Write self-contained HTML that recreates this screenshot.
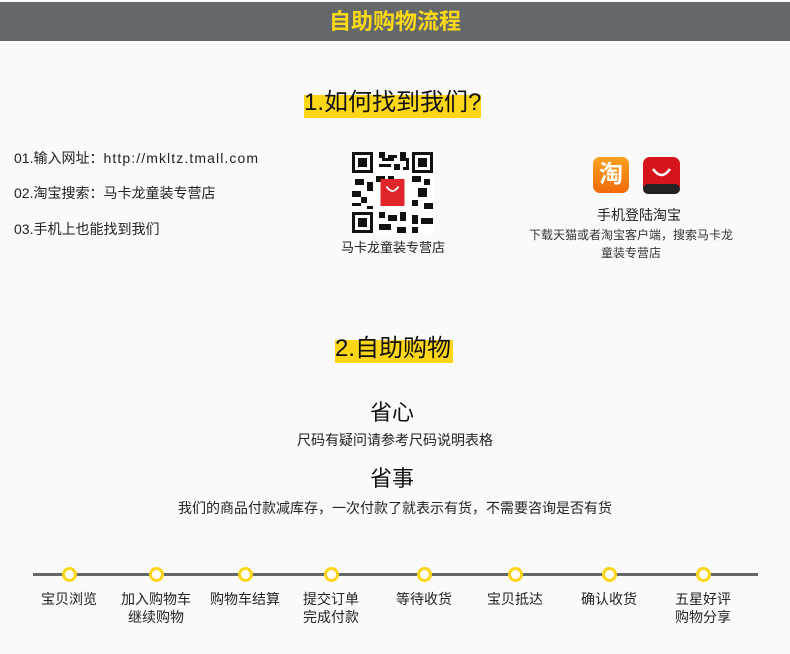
<!DOCTYPE html>
<html><head><meta charset="utf-8"><style>
*{margin:0;padding:0;box-sizing:border-box}
body{width:790px;height:654px;background:#fafafa;font-family:"Liberation Sans","Noto Sans CJK SC",sans-serif;color:#222;position:relative;overflow:hidden}
.a{position:absolute;white-space:nowrap}
.hdr{position:absolute;left:0;top:2px;width:790px;height:39px;background:#65686b;color:#fbd914;font-size:22px;font-weight:bold;text-align:center;line-height:39px}
.hl{position:absolute;background:#fcd617}
.t{font-size:24px;color:#111}
.s{font-size:14px;color:#222}
.line{position:absolute;left:33px;top:573px;width:725px;height:3px;background:#65686b}
.dot{position:absolute;top:567px;width:15px;height:15px;border-radius:50%;border:3px solid #fcd617;background:#fff}
.lb{position:absolute;top:590px;font-size:14px;text-align:center;width:90px;line-height:18px;color:#222}
</style></head><body>
<div class="hdr">自助购物流程</div>
<div class="hl" style="left:304px;top:95px;width:177px;height:23px"></div>
<div class="a t" style="left:304px;top:82px">1.如何找到我们?</div>
<div class="a s" style="left:14px;top:148px">01.输入网址：<span style="letter-spacing:1.1px">http://mkltz.tmall.com</span></div>
<div class="a s" style="left:14px;top:183px">02.淘宝搜索：马卡龙童装专营店</div>
<div class="a s" style="left:14px;top:219px">03.手机上也能找到我们</div>
<svg class="a" style="left:352px;top:152px" width="81" height="81" viewBox="0 0 27 27">
<rect width="27" height="27" fill="#fff"/>
<g fill="#111">
<rect x="0" y="0" width="7" height="7"/><rect x="20" y="0" width="7" height="7"/><rect x="0" y="20" width="7" height="7"/>
<path d="M9 0h2v2h-2zM12 1h3v1h-3zM16 0h2v3h-2zM9 4h4v1h-4zM14 4h2v2h-2zM17 5h2v1h-2zM8 8h3v2h-3zM12 8h2v1h-2zM20 8h3v2h-3zM24 9h2v2h-2zM1 9h3v2h-3zM5 10h2v3h-2zM0 13h3v2h-3zM22 12h3v3h-3zM20 16h2v2h-2zM24 17h3v2h-3zM9 20h2v2h-2zM12 21h3v2h-3zM16 20h2v3h-2zM20 21h2v3h-2zM23 22h4v2h-4zM9 24h4v2h-4zM15 25h3v2h-3zM20 25h2v2h-2zM3 15h2v2h-2zM0 17h3v1h-3zM5 18h2v1h-2zM10 2h4v1h-4zM18 2h1v3h-1z"/>
</g>
<g fill="#fff"><rect x="1" y="1" width="5" height="5"/><rect x="21" y="1" width="5" height="5"/><rect x="1" y="21" width="5" height="5"/></g>
<g fill="#111"><rect x="2" y="2" width="3" height="3"/><rect x="22" y="2" width="3" height="3"/><rect x="2" y="22" width="3" height="3"/></g>
<rect x="9.5" y="9" width="8" height="9" fill="#e0262a"/>
<path d="M11.5 11.5q2 3 4 0" stroke="#fff" stroke-width=".6" fill="none"/>
</svg>
<div class="a" style="left:341px;top:237px;font-size:13px;color:#222">马卡龙童装专营店</div>
<div class="a" style="left:593px;top:157px;width:36px;height:36px;border-radius:7px;background:linear-gradient(#fca11e,#f26a0a);color:#fff;font-size:24px;font-weight:bold;text-align:center;line-height:36px">淘</div>
<svg class="a" style="left:643px;top:157px" width="37" height="37" viewBox="0 0 37 37"><rect width="37" height="37" rx="7" fill="#d7141b"/><rect y="27" width="37" height="10" rx="5" fill="#222"/><path d="M10 12q8.5 12 17 0" stroke="#fff" stroke-width="2.5" fill="none"/></svg>
<div class="a" style="left:597px;top:205px;font-size:14px">手机登陆淘宝</div>
<div class="a" style="left:529px;top:226px;font-size:12px;color:#333">下载天猫或者淘宝客户端，搜索马卡龙</div>
<div class="a" style="left:601px;top:244px;font-size:12px;color:#333">童装专营店</div>
<div class="hl" style="left:335px;top:340px;width:118px;height:23px"></div>
<div class="a t" style="left:335px;top:328px">2.自助购物</div>
<div class="a" style="left:370px;top:395px;font-size:22px;color:#111">省心</div>
<div class="a" style="left:297px;top:430px;font-size:14px">尺码有疑问请参考尺码说明表格</div>
<div class="a" style="left:370px;top:461px;font-size:22px;color:#111">省事</div>
<div class="a" style="left:178px;top:498px;font-size:14px">我们的商品付款减库存，一次付款了就表示有货，不需要咨询是否有货</div>
<div class="line"></div>
<div class="dot" style="left:62px"></div><div class="dot" style="left:149px"></div><div class="dot" style="left:238px"></div><div class="dot" style="left:324px"></div><div class="dot" style="left:417px"></div><div class="dot" style="left:508px"></div><div class="dot" style="left:602px"></div><div class="dot" style="left:696px"></div>
<div class="lb" style="left:24px">宝贝浏览</div>
<div class="lb" style="left:111px">加入购物车<br>继续购物</div>
<div class="lb" style="left:200px">购物车结算</div>
<div class="lb" style="left:286px">提交订单<br>完成付款</div>
<div class="lb" style="left:379px">等待收货</div>
<div class="lb" style="left:470px">宝贝抵达</div>
<div class="lb" style="left:564px">确认收货</div>
<div class="lb" style="left:658px">五星好评<br>购物分享</div>
</body></html>
